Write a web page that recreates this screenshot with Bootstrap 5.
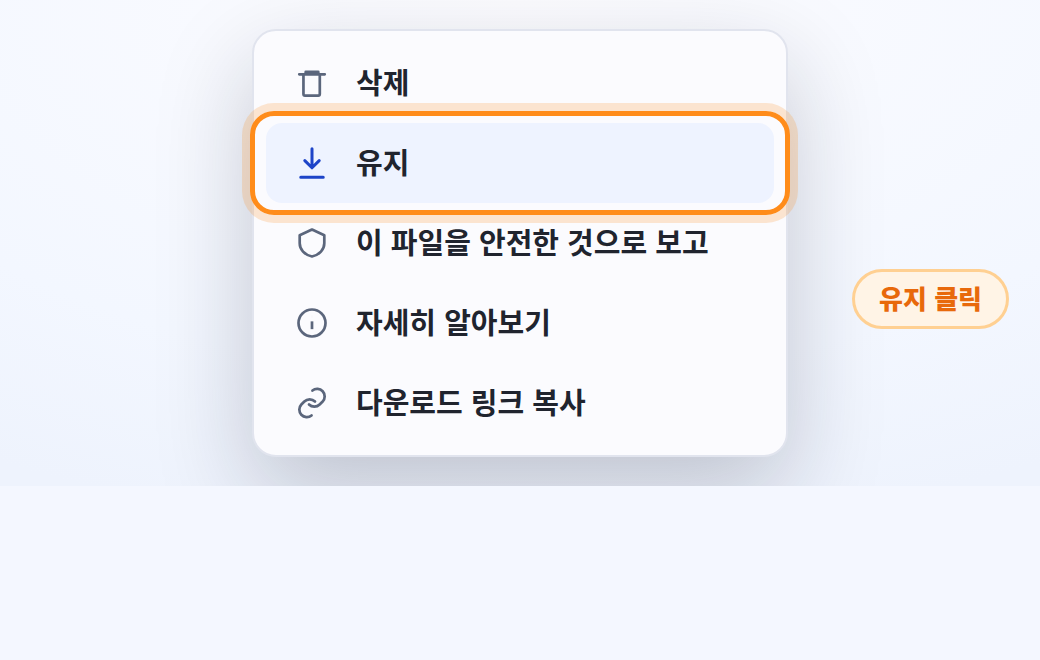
<!DOCTYPE html>
<html lang="ko">
<head>
<meta charset="utf-8">
<meta name="viewport" content="width=device-width, initial-scale=1">
<title>다운로드 메뉴</title>
<link href="https://cdn.jsdelivr.net/npm/bootstrap@5.3.0/dist/css/bootstrap.min.css" rel="stylesheet">
<style>
  body { background: #f4f7ff; font-family: "Noto Sans CJK KR", sans-serif; }
  .stage {
    display: grid;
    grid-template-columns: minmax(0, 1fr) minmax(0, 536px) minmax(0, 1fr);
    padding: 29px 0;
    background: radial-gradient(ellipse 100% 110% at 50% 0, #fcfcff, #f3f7ff 70%, #eef3fd);
  }
  .menu-panel {
    grid-column: 2;
    padding: 12px;
    background: #fbfbfe;
    border: 2px solid #e1e4ee;
    border-radius: 24px;
    box-shadow: 0 36px 96px rgba(17, 24, 39, .22);
  }
  .menu-row {
    gap: 26px;
    height: 80px;
    padding: 0 28px;
    border: 0;
    border-radius: 16px;
    background: transparent;
    color: #20242e;
    font-size: 29px;
    font-weight: 600;
    line-height: 40px;
  }
  .menu-row span { padding-bottom: 4px; }
  .menu-row svg {
    flex: none;
    width: 36px;
    height: 36px;
    fill: none;
    stroke: #5b667c;
    stroke-width: 1.8;
    stroke-linecap: round;
    stroke-linejoin: round;
  }
  .menu-row.current { background: #eef3ff; }
  .menu-row.current svg { stroke: #1d44c8; stroke-width: 2; }
  .menu-row.current::after {
    content: "";
    position: absolute;
    inset: -12px -16px;
    border: 5px solid #ff8c1a;
    border-radius: 24px;
    box-shadow: 0 0 0 8px rgba(255, 140, 26, .2);
    pointer-events: none;
  }
  .hint {
    margin: 112px 31px 0 0;
    padding: 6px 24px 8px;
    background: #fff4e6;
    border: 3px solid #ffd092;
    color: #e8690b;
    font-size: 26px;
    font-weight: 800;
    line-height: 40px;
  }
</style>
</head>
<body>
<main class="stage overflow-hidden">
  <div class="menu-panel d-flex flex-column" role="menu">
    <button type="button" role="menuitem" class="menu-row d-flex align-items-center w-100 text-start">
      <svg viewBox="0 0 24 24" aria-hidden="true"><path d="M3.5 6.200h17M7.800 6V4.600h8.400V6M6.300 6.200v13.200q0 1 1 1h8.900q1 0 1-1V6.200"/></svg>
      <span>삭제</span>
    </button>
    <button type="button" role="menuitem" class="menu-row current d-flex align-items-center w-100 text-start position-relative">
      <svg viewBox="0 0 24 24" aria-hidden="true"><path d="M12 2.500v12.300M7.200 10.400l4.800 4.800 4.800-4.800M4.500 21.500h15"/></svg>
      <span>유지</span>
    </button>
    <button type="button" role="menuitem" class="menu-row d-flex align-items-center w-100 text-start">
      <svg viewBox="0 0 24 24" aria-hidden="true"><path d="M12 3l8.200 3.800v5.400c0 4.200-3.200 7.600-8.200 8.800-5-1.200-8.200-4.600-8.200-8.800V6.800z"/></svg>
      <span>이 파일을 안전한 것으로 보고</span>
    </button>
    <button type="button" role="menuitem" class="menu-row d-flex align-items-center w-100 text-start">
      <svg viewBox="0 0 24 24" aria-hidden="true"><circle cx="12" cy="12" r="9"/><path d="M12 10.900v5.200" stroke-linecap="butt"/><path d="M12 7.200v1" stroke-width=".1" stroke-opacity=".3"/></svg>
      <span>자세히 알아보기</span>
    </button>
    <button type="button" role="menuitem" class="menu-row d-flex align-items-center w-100 text-start">
      <svg viewBox="0 0 24 24" aria-hidden="true"><path d="M10 13a5 5 0 0 0 7.100 0l2-2a5 5 0 0 0-6.800-7.300M14 11a5 5 0 0 0-7.100 0l-2 2a5 5 0 0 0 6.800 7.300"/></svg>
      <span>다운로드 링크 복사</span>
    </button>
  </div>
  <div class="hint rounded-pill align-self-center ms-auto text-nowrap position-relative">유지 클릭</div>
</main>
<script src="https://cdn.jsdelivr.net/npm/bootstrap@5.3.0/dist/js/bootstrap.bundle.min.js"></script>
</body>
</html>
